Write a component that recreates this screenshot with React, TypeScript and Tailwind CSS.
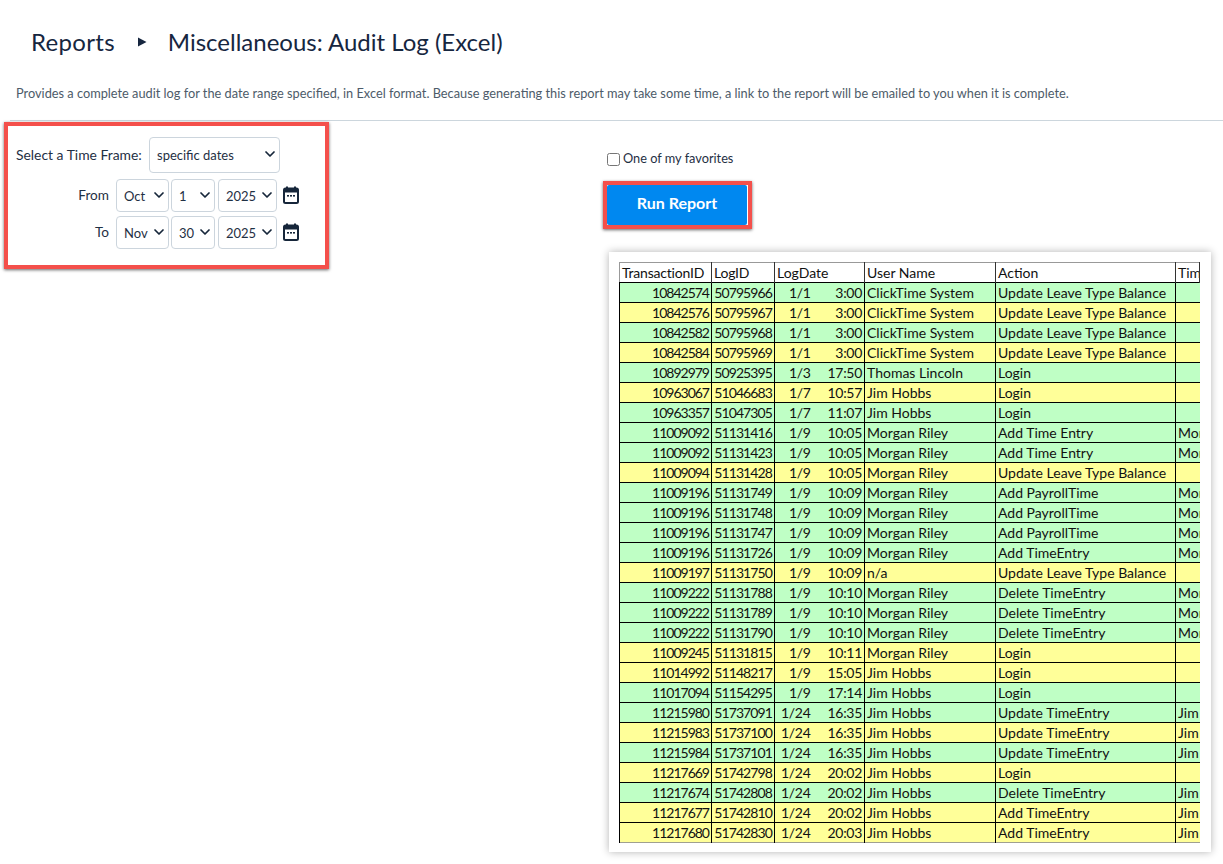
import { ChevronDown } from "lucide-react";

const G = "bg-[#bfffc5]";
const Y = "bg-[#ffff99]";

const sys = "ClickTime System";
const bal = "Update Leave Type Balance";
const mr = "Morgan Riley";
const jh = "Jim Hobbs";

const rows = [
  ["10842574", "50795966", "1/1", "3:00", sys, bal, "", G],
  ["10842576", "50795967", "1/1", "3:00", sys, bal, "", Y],
  ["10842582", "50795968", "1/1", "3:00", sys, bal, "", G],
  ["10842584", "50795969", "1/1", "3:00", sys, bal, "", Y],
  ["10892979", "50925395", "1/3", "17:50", "Thomas Lincoln", "Login", "", G],
  ["10963067", "51046683", "1/7", "10:57", jh, "Login", "", Y],
  ["10963357", "51047305", "1/7", "11:07", jh, "Login", "", G],
  ["11009092", "51131416", "1/9", "10:05", mr, "Add Time Entry", "Mor", G],
  ["11009092", "51131423", "1/9", "10:05", mr, "Add Time Entry", "Mor", G],
  ["11009094", "51131428", "1/9", "10:05", mr, bal, "", Y],
  ["11009196", "51131749", "1/9", "10:09", mr, "Add PayrollTime", "Mor", G],
  ["11009196", "51131748", "1/9", "10:09", mr, "Add PayrollTime", "Mor", G],
  ["11009196", "51131747", "1/9", "10:09", mr, "Add PayrollTime", "Mor", G],
  ["11009196", "51131726", "1/9", "10:09", mr, "Add TimeEntry", "Mor", G],
  ["11009197", "51131750", "1/9", "10:09", "n/a", bal, "", Y],
  ["11009222", "51131788", "1/9", "10:10", mr, "Delete TimeEntry", "Mor", G],
  ["11009222", "51131789", "1/9", "10:10", mr, "Delete TimeEntry", "Mor", G],
  ["11009222", "51131790", "1/9", "10:10", mr, "Delete TimeEntry", "Mor", G],
  ["11009245", "51131815", "1/9", "10:11", mr, "Login", "", Y],
  ["11014992", "51148217", "1/9", "15:05", jh, "Login", "", Y],
  ["11017094", "51154295", "1/9", "17:14", jh, "Login", "", G],
  ["11215980", "51737091", "1/24", "16:35", jh, "Update TimeEntry", "Jim", G],
  ["11215983", "51737100", "1/24", "16:35", jh, "Update TimeEntry", "Jim", Y],
  ["11215984", "51737101", "1/24", "16:35", jh, "Update TimeEntry", "Jim", G],
  ["11217669", "51742798", "1/24", "20:02", jh, "Login", "", Y],
  ["11217674", "51742808", "1/24", "20:02", jh, "Delete TimeEntry", "Jim", G],
  ["11217677", "51742810", "1/24", "20:02", jh, "Add TimeEntry", "Jim", Y],
  ["11217680", "51742830", "1/24", "20:03", jh, "Add TimeEntry", "Jim", Y],
];

function CalendarIcon() {
  return (
    <svg width="16" height="18" viewBox="0 0 16 18" className="ml-[6px] -mt-[2px] shrink-0">
      <rect x="3" y="0.5" width="2" height="3" fill="#16263a" />
      <rect x="11" y="0.5" width="2" height="3" fill="#16263a" />
      <rect x="1" y="2.5" width="14" height="14.5" rx="1.5" fill="none" stroke="#16263a" strokeWidth="2" />
      <rect x="1" y="2.5" width="14" height="4" fill="#16263a" />
      <rect x="4" y="9" width="2" height="1.6" fill="#16263a" />
      <rect x="7" y="9" width="2" height="1.6" fill="#16263a" />
      <rect x="10" y="9" width="2" height="1.6" fill="#16263a" />
    </svg>
  );
}

function Pick({ value, w }: { value: string; w: string }) {
  return (
    <div className={`relative ${w} shrink-0 rounded border border-[#ccd5dd] bg-white pl-[7px] text-[13px] text-[#1f3044]`}>
      {value}
      <ChevronDown className="absolute right-[1px] top-1/2 h-[16px] w-[16px] -translate-y-[9px] text-[#16263a]" strokeWidth={2.6} />
    </div>
  );
}

function DateRow({ label, mon, day }: { label: string; mon: string; day: string }) {
  return (
    <div className="flex items-center">
      <span className="w-[100px] pr-[7px] text-right text-[13.6px] text-[#1f3044]">{label}</span>
      <Pick value={mon} w="h-[33px] w-[53px] leading-[33px]" />
      <div className="ml-[2px]">
        <Pick value={day} w="h-[33px] w-[44px] leading-[33px]" />
      </div>
      <div className="ml-[3px]">
        <Pick value="2025" w="h-[33px] w-[59px] leading-[33px]" />
      </div>
      <CalendarIcon />
    </div>
  );
}

export default function App() {
  return (
    <div className="h-[864px] overflow-hidden bg-white font-['Lato',sans-serif] text-[#1f3044]">
      {/* Heading */}
      <div className="flex h-[84px] items-center pb-[1px] pl-[31px] text-[24px] text-[#16263f]">
        <span className="tracking-[0.3px]">Reports</span>
        <svg width="10" height="10" viewBox="0 0 10 10" className="ml-[22px] mr-[21px]">
          <path d="M1 0.5 L9.5 5 L1 9.5 Z" fill="#16263f" />
        </svg>
        <span>Miscellaneous: Audit Log (Excel)</span>
      </div>
      <p className="pl-[16px] text-[12.78px] leading-[18px] text-[#4d5b69]">
        Provides a complete audit log for the date range specified, in Excel format. Because generating this report may
        take some time, a link to the report will be emailed to you when it is complete.
      </p>
      <div className="ml-[10px] mt-[18px] border-t border-[#ccd6dd]" />

      <div className="flex">
        {/* Time frame */}
        <div className="ml-[4px] mt-[1px] h-[147px] w-[325px] border-4 border-[#f4504b] pl-[8px] pt-[11px] shadow-[0_1px_3px_rgba(0,0,0,0.6)]">
          <div className="flex items-center">
            <span className="w-[133px] text-[13.9px]">Select a Time Frame:</span>
            <Pick value="specific dates" w="h-[36px] w-[131px] leading-[34px]" />
          </div>
          <div className="mt-[6px] flex flex-col gap-[4px]">
            <DateRow label="From" mon="Oct" day="1" />
            <DateRow label="To" mon="Nov" day="30" />
          </div>
        </div>

        {/* Right column */}
        <div className="ml-[278px] flex flex-col">
          <label className="mt-[29px] flex h-[16px] items-center text-[12.75px] leading-[16px]">
            <input type="checkbox" className="mr-[3px] mt-[3px] h-[13px] w-[13px]" />
            One of my favorites
          </label>
          <div className="-ml-[4px] mt-[15px] w-[149px] border-4 border-[#f4504b] shadow-[0_1px_3px_rgba(0,0,0,0.6)]">
            <div className="flex h-[40px] w-[140px] items-center justify-center rounded-[2px] bg-[#0088f0] pb-[4px] text-[16px] font-bold text-white">
              Run Report
            </div>
          </div>

          {/* Sample output */}
          <div className="ml-[2px] mt-[23px] h-[600px] w-[602px] bg-white pl-[10px] pt-[10px] shadow-[0_0_8px_rgba(0,0,0,0.3)]">
            <table className="w-[580px] table-fixed border-collapse text-[14px] leading-[19px] text-[#111111]">
              <colgroup>
                <col className="w-[92px]" />
                <col className="w-[63px]" />
                <col className="w-[90px]" />
                <col className="w-[131px]" />
                <col className="w-[180px]" />
                <col className="w-[24px]" />
              </colgroup>
              <thead>
                <tr className="h-[20px] border border-[#999999] border-b-black">
                  {["TransactionID", "LogID", "LogDate", "User Name", "Action", "Tim"].map((h, i) => (
                    <th
                      key={h}
                      className={`overflow-hidden whitespace-nowrap border-r border-[#333333] pl-[2px] text-left font-normal ${i < 2 ? "tracking-[-0.2px]" : ""}`}
                    >
                      {h}
                    </th>
                  ))}
                </tr>
              </thead>
              <tbody>
                {rows.map((r, i) => (
                  <tr key={i} className={`h-[20px] border-b border-black last:border-b-[#a0a090] ${r[7]}`}>
                    <td className="border-x border-black pr-[2px] text-right tracking-[-1px]">{r[0]}</td>
                    <td className="border-r border-black pr-[2px] text-right tracking-[-0.9px]">{r[1]}</td>
                    <td className="border-r border-black pr-[2px] tracking-[-0.3px]">
                      <div className="flex justify-between">
                        <span className={r[2].length > 3 ? "pl-[6px]" : "pl-[14px]"}>{r[2]}</span>
                        <span>{r[3]}</span>
                      </div>
                    </td>
                    <td className="overflow-hidden whitespace-nowrap border-r border-black pl-[2px]">{r[4]}</td>
                    <td className="overflow-hidden whitespace-nowrap border-r border-black pl-[2px]">{r[5]}</td>
                    <td className="overflow-hidden whitespace-nowrap pl-[2px]">{r[6]}</td>
                  </tr>
                ))}
              </tbody>
            </table>
          </div>
        </div>
      </div>
    </div>
  );
}
